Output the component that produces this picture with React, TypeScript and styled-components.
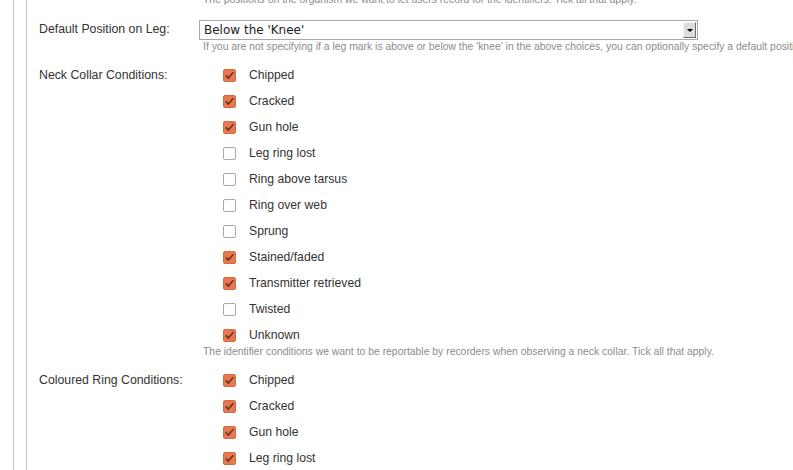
import React from "react";
import styled, { createGlobalStyle } from "styled-components";

const Global = createGlobalStyle`
  html, body { margin: 0; padding: 0; background: #fff; }
  body { font-family: "Liberation Sans", Arial, sans-serif; color: #333; overflow: hidden; }
`;

const Outer = styled.div`
  margin-left: 13px;
  border-left: 1px solid #c8c8c8;
  height: 470px;
  overflow: hidden;
`;

const Inner = styled.div`
  margin-left: 12px;
  border-left: 1px solid #c8c8c8;
  height: 100%;
  padding-left: 12px;
  overflow: hidden;
`;

const Field = styled.div<{ $mt?: number }>`
  display: grid;
  grid-template-columns: 160px 1fr;
  margin-top: ${(p) => p.$mt ?? 0}px;
`;

const Label = styled.label<{ $lh: number }>`
  font-size: 12.3px;
  line-height: ${(p) => p.$lh}px;
  color: #333;
  white-space: nowrap;
`;

const Control = styled.div`
  display: flex;
  flex-direction: column;
  min-width: 0;
`;

const Help = styled.div`
  font-size: 10.4px;
  line-height: 13px;
  color: #8c8c8c;
  padding-left: 4px;
  white-space: nowrap;
`;

const TopHelp = styled(Help)`
  margin-top: -7px;
  margin-left: 160px;
`;

const Select = styled.div`
  width: 497px;
  height: 18px;
  border: 1px solid #a9a9a9;
  display: flex;
  align-items: center;
  justify-content: space-between;
  background: #fff;
  box-sizing: content-box;
`;

const SelectText = styled.span`
  font-family: "DejaVu Sans", sans-serif;
  font-size: 12px;
  padding-left: 4px;
  color: #222;
`;

const Arrow = styled.span`
  width: 13px;
  height: 16px;
  margin-right: 1px;
  background: #dcdcdc;
  border-top: 1px solid #f4f4f4;
  border-left: 1px solid #f4f4f4;
  border-right: 1px solid #6e6e6e;
  border-bottom: 1px solid #6e6e6e;
  box-sizing: border-box;
  display: flex;
  align-items: center;
  justify-content: center;
  &::after {
    content: "";
    border-left: 3px solid transparent;
    border-right: 3px solid transparent;
    border-top: 3px solid #000;
    margin-top: 1px;
  }
`;

const List = styled.ul`
  list-style: none;
  margin: 0;
  padding: 0 0 0 24px;
  display: flex;
  flex-direction: column;
  gap: 6px;
`;

const Item = styled.li`
  display: flex;
  align-items: center;
  height: 20px;
  font-size: 12.2px;
  color: #333;
`;

const Box = styled.span<{ $on: boolean }>`
  width: 13px;
  height: 13px;
  box-sizing: border-box;
  border-radius: 2px;
  margin-right: 13px;
  display: inline-flex;
  align-items: center;
  justify-content: center;
  background: ${(p) => (p.$on ? "#e8784f" : "#fff")};
  border: 1px solid ${(p) => (p.$on ? "#d66a42" : "#a8a8a8")};
  svg { display: block; }
`;

const Check = () => (
  <svg width="11" height="11" viewBox="0 0 11 11">
    <path d="M1.8 5.4 L4.3 8 L9.4 2.3" fill="none" stroke="#6a3526" strokeWidth="1.7" />
  </svg>
);

type Opt = [string, boolean];

const neck: Opt[] = [
  ["Chipped", true],
  ["Cracked", true],
  ["Gun hole", true],
  ["Leg ring lost", false],
  ["Ring above tarsus", false],
  ["Ring over web", false],
  ["Sprung", false],
  ["Stained/faded", true],
  ["Transmitter retrieved", true],
  ["Twisted", false],
  ["Unknown", true],
];

const ring: Opt[] = [
  ["Chipped", true],
  ["Cracked", true],
  ["Gun hole", true],
  ["Leg ring lost", true],
  ["Ring above tarsus", true],
];

const Options = ({ items }: { items: Opt[] }) => (
  <List>
    {items.map(([t, on]) => (
      <Item key={t}>
        <Box $on={on}>{on && <Check />}</Box>
        {t}
      </Item>
    ))}
  </List>
);

export default function App() {
  return (
    <>
      <Global />
      <Outer>
        <Inner>
          <TopHelp>The positions on the organism we want to let users record for the identifiers. Tick all that apply.</TopHelp>
          <Field $mt={14}>
            <Label $lh={18}>Default Position on Leg:</Label>
            <Control>
              <Select>
                <SelectText>Below the 'Knee'</SelectText>
                <Arrow />
              </Select>
              <Help>If you are not specifying if a leg mark is above or below the 'knee' in the above choices, you can optionally specify a default position.</Help>
            </Control>
          </Field>
          <Field $mt={12}>
            <Label $lh={20}>Neck Collar Conditions:</Label>
            <Control>
              <Options items={neck} />
              <Help>The identifier conditions we want to be reportable by recorders when observing a neck collar. Tick all that apply.</Help>
            </Control>
          </Field>
          <Field $mt={12}>
            <Label $lh={20}>Coloured Ring Conditions:</Label>
            <Control>
              <Options items={ring} />
            </Control>
          </Field>
        </Inner>
      </Outer>
    </>
  );
}
